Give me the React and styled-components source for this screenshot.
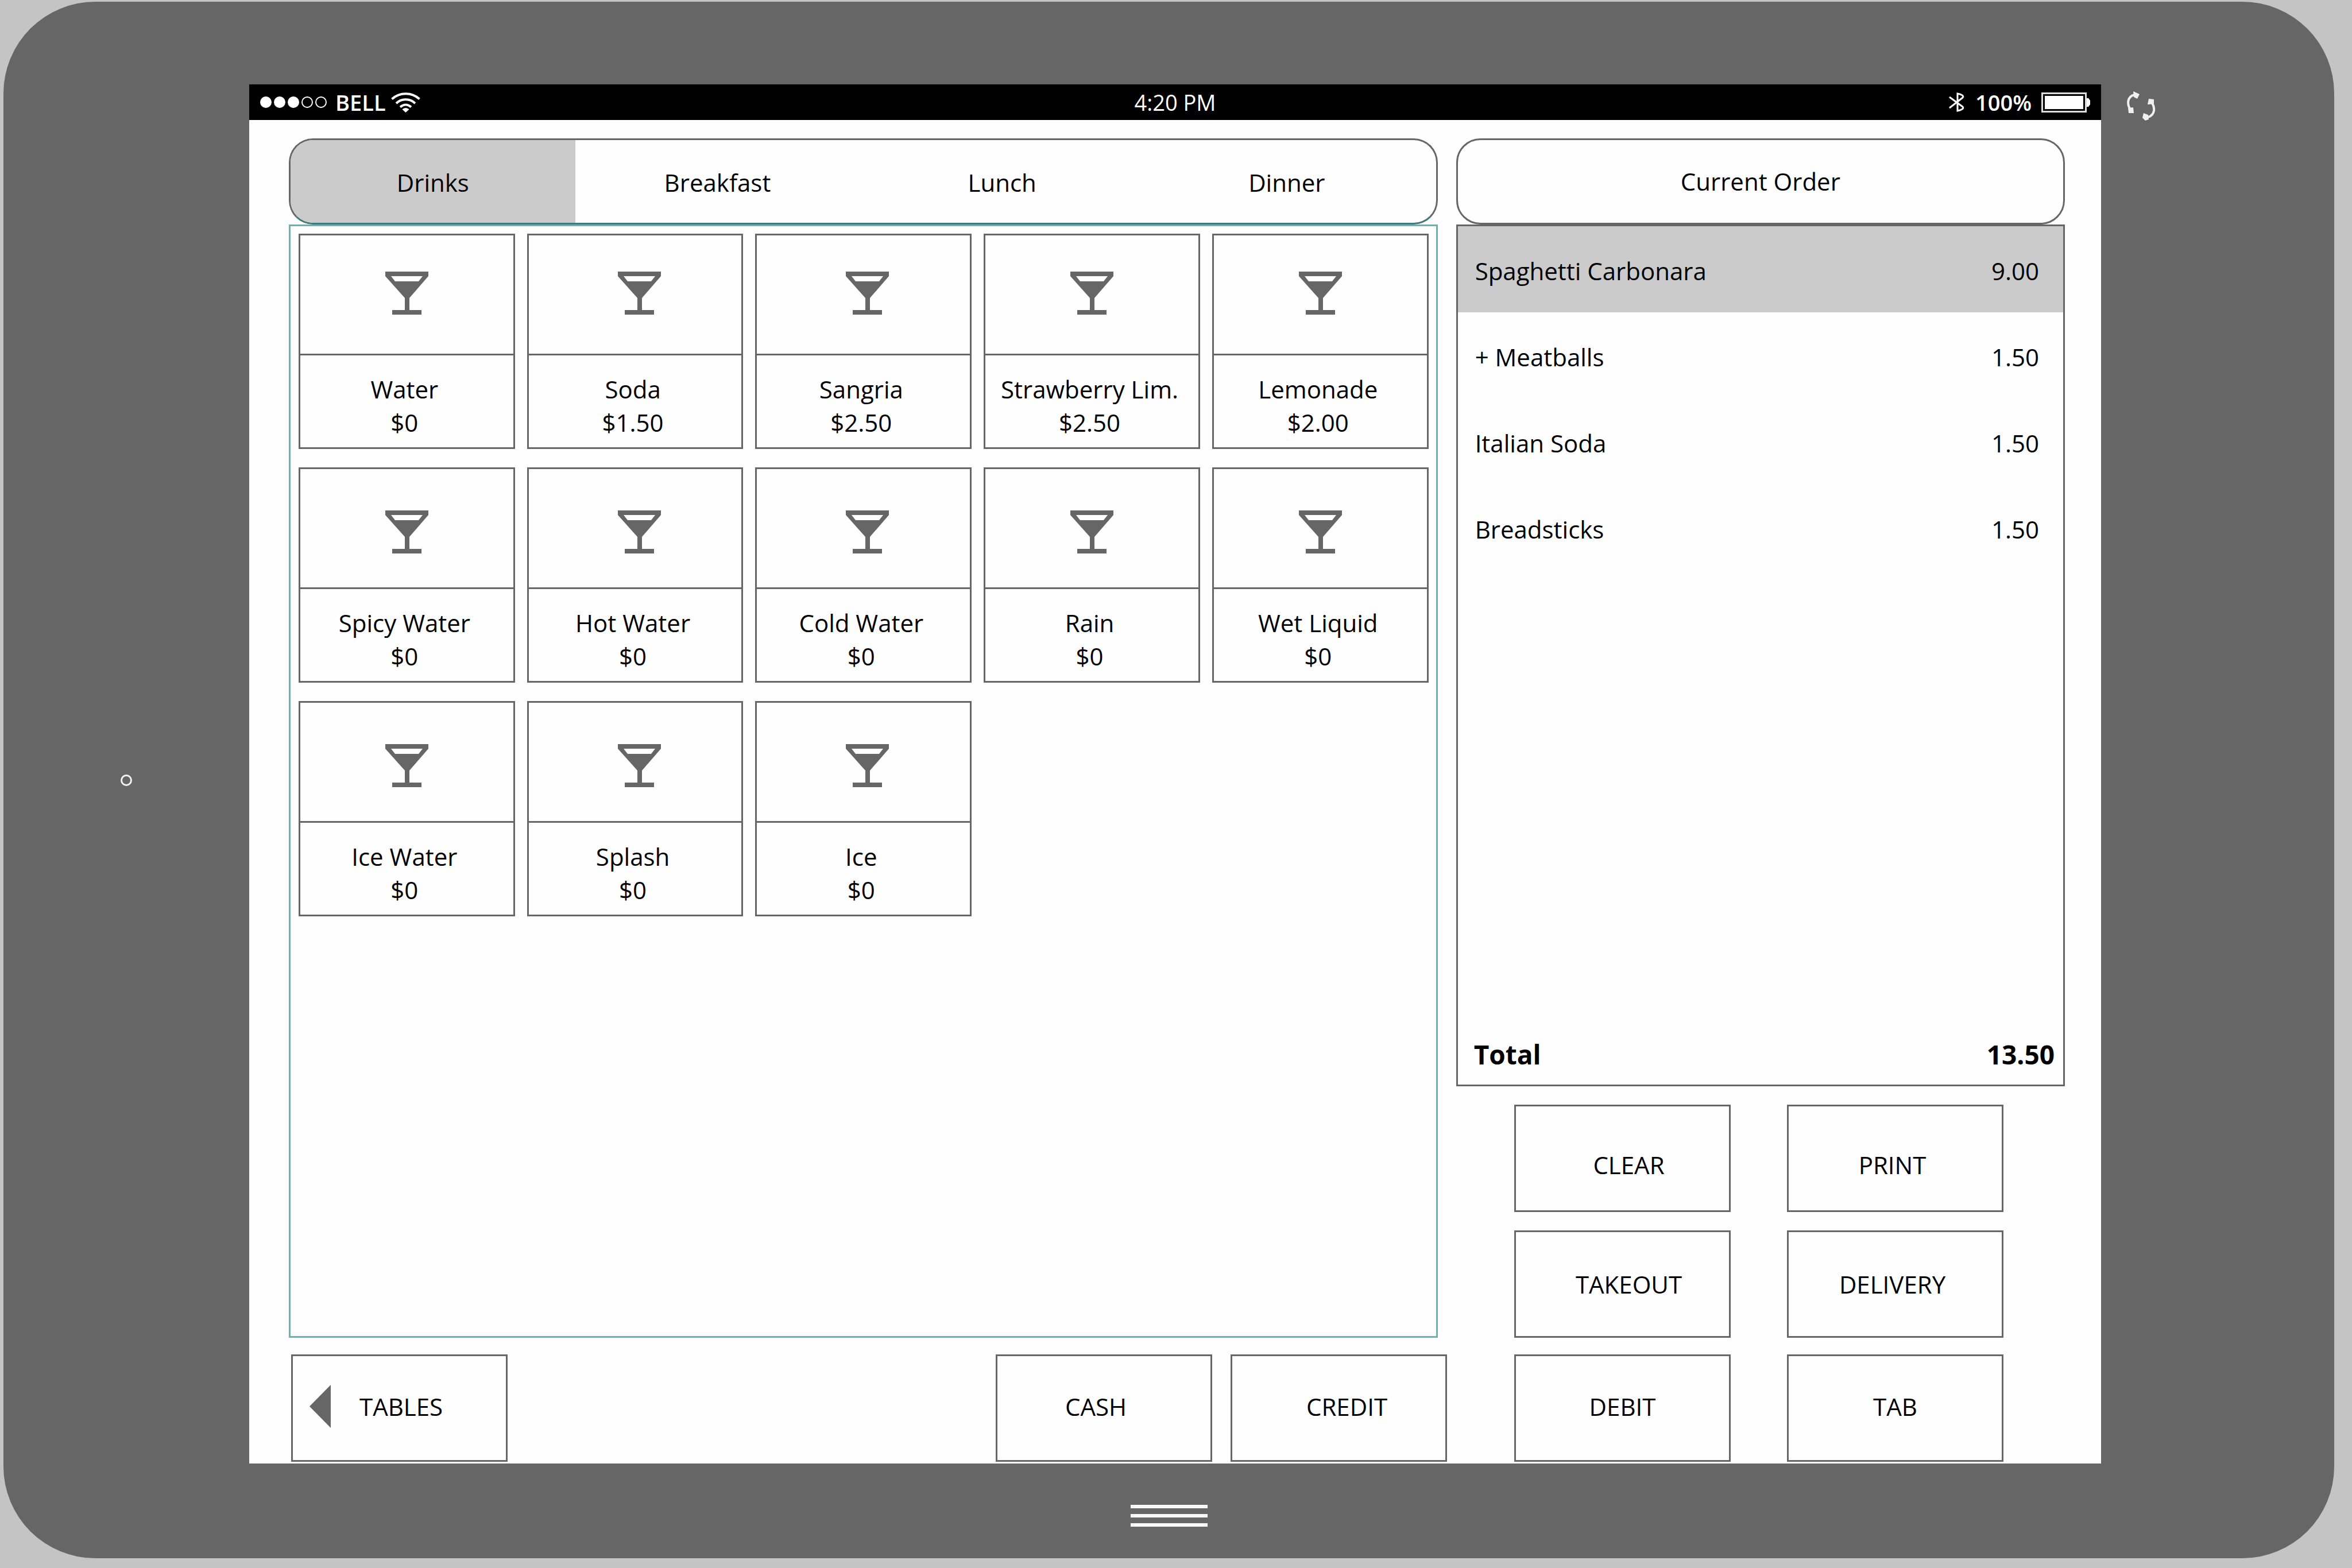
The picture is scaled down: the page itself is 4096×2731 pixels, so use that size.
import React, { useState } from "react";
import styled, { createGlobalStyle } from "styled-components";

const GlobalStyle = createGlobalStyle`
  *, *::before, *::after { box-sizing: border-box; }
  body {
    margin: 0;
    background: #c4c4c4;
    color: #000;
    font-family: "Open Sans", "Noto Sans", sans-serif;
    font-size: 42px;
    line-height: 58px;
  }
  button {
    font: inherit;
    color: inherit;
    background: none;
    border: 0;
    padding: 0;
    cursor: pointer;
  }
`;

const Device = styled.div`
  display: grid;
  grid-template-columns: 428px minmax(0, 1fr) 406px;
  grid-template-rows: 144px minmax(0, 1fr) 165px;
  min-height: calc(100vh - 20px);
  margin: 3px 31px 17px 6px;
  border-radius: 160px;
  background: #666;
`;

const CameraSide = styled.div`
  grid-area: 1 / 1 / 4 / 2;
  display: flex;
  align-items: center;
  justify-content: center;
`;

const Camera = styled.span`
  width: 20px;
  height: 20px;
  border: 3px solid #f2f2f2;
  border-radius: 50%;
`;

const RotateSide = styled.div`
  grid-area: 2 / 3 / 3 / 4;
  padding: 12px 44px;
`;

const RotateButton = styled.button`
  display: block;
  width: 51px;
  height: 51px;
  svg { display: block; width: 100%; height: 100%; }
`;

const HomeSide = styled.div`
  grid-area: 3 / 1 / 4 / 4;
  display: flex;
  justify-content: center;
  align-items: flex-start;
  padding-top: 72px;
`;

const HomeButton = styled.button`
  display: flex;
  flex-direction: column;
  gap: 10px;
  width: 134px;
`;

const HomeLine = styled.span`
  height: 6px;
  width: 100%;
  background: #fafafa;
`;

const Screen = styled.div`
  grid-area: 2 / 2 / 3 / 3;
  display: flex;
  flex-direction: column;
  background: #fefefe;
`;

const StatusBar = styled.header`
  display: grid;
  grid-template-columns: 1fr auto 1fr;
  align-items: center;
  height: 62px;
  padding: 0 19px;
  background: #000;
  color: #fff;
  font-size: 38px;
`;

const StatusGroup = styled.div`
  display: flex;
  align-items: center;
  justify-content: ${(p) => (p.$end ? "flex-end" : "flex-start")};
  gap: ${(p) => (p.$end ? 17 : 9)}px;
  font-weight: 600;
`;

const Signal = styled.div`
  display: flex;
  gap: 4px;
  margin-right: 6px;
`;

const Dot = styled.span`
  width: 20px;
  height: 20px;
  border: 2px solid #fff;
  border-radius: 50%;
  background: ${(p) => (p.$on ? "#fff" : "transparent")};
`;

const Main = styled.main`
  flex: 1;
  display: grid;
  grid-template-columns: minmax(0, 100fr) minmax(0, 53fr);
  gap: 32px;
  padding: 32px 63px 0 69px;
`;

const Column = styled.section`
  display: flex;
  flex-direction: column;
`;

const Tabs = styled.div`
  display: grid;
  grid-template-columns: repeat(4, 1fr);
  height: 150px;
  padding-right: 12px;
  border: 3px solid #666;
  border-bottom-color: #44777a;
  border-radius: 42px;
  overflow: hidden;
`;

const Tab = styled.button`
  padding-top: 4px;
  background: ${(p) => (p.$active ? "#cbcbcb" : "transparent")};
`;

const MenuPanel = styled.div`
  flex: 1;
  padding: 13px 13px 13px 14px;
  border: 3px solid #62b5b5;
`;

const CardArt = styled.span`
  display: flex;
  align-items: center;
  justify-content: center;
  width: 100%;
  height: 209px;
  padding-bottom: 6px;
  border-bottom: 3px solid #666;
  svg { width: 75px; height: 75px; }
`;

const MenuGrid = styled.div`
  display: grid;
  grid-template-columns: repeat(5, minmax(0, 1fr));
  column-gap: 21px;
  row-gap: 32px;

  > :nth-child(n + 6) ${CardArt} {
    padding: 12px 0 0;
  }
  > :nth-child(5n + 2) ${CardArt},
  > :nth-child(5n + 3) ${CardArt} {
    padding-left: 14px;
  }
`;

const Card = styled.button`
  display: flex;
  flex-direction: column;
  height: 375px;
  border: 3px solid #666;
`;

const CardLabel = styled.span`
  display: flex;
  flex-direction: column;
  align-items: center;
  width: 100%;
  padding: 30px 8px 0 0;
  white-space: nowrap;
`;

const OrderTitle = styled.h1`
  display: flex;
  align-items: center;
  justify-content: center;
  height: 150px;
  margin: 0;
  border: 3px solid #666;
  border-radius: 42px;
  font-size: 42px;
  font-weight: 400;
`;

const OrderPanel = styled.div`
  flex: 1;
  display: flex;
  flex-direction: column;
  justify-content: space-between;
  border: 3px solid #666;
`;

const OrderTable = styled.table`
  width: 100%;
  border-collapse: collapse;
`;

const OrderRow = styled.tr`
  height: 150px;
  background: ${(p) => (p.$selected ? "#cbcbcb" : "transparent")};
`;

const ItemCell = styled.td`
  padding: 6px 0 0 30px;
`;

const PriceCell = styled.td`
  padding: 6px 42px 0 0;
  text-align: right;
`;

const TotalRow = styled.div`
  display: flex;
  justify-content: space-between;
  padding: 0 15px 24px 28px;
  font-size: 46px;
  font-weight: 700;
`;

const ActionButton = styled.button`
  display: flex;
  align-items: center;
  justify-content: ${(p) => (p.$back ? "flex-start" : "center")};
  gap: 50px;
  width: 377px;
  height: 187px;
  padding: ${(p) => (p.$back ? "0 29px 6px" : "0")};
  border: 3px solid #666;
`;

const ActionRow = styled.div`
  display: flex;
  justify-content: flex-end;
  gap: 98px;
`;

const Actions = styled.div`
  display: flex;
  flex-direction: column;
  gap: 32px;
  margin-top: 32px;
  padding-right: 107px;

  ${ActionRow}:first-child ${ActionButton} {
    padding-top: 22px;
  }
  ${ActionButton}:first-child {
    padding-left: 22px;
  }
  ${ActionButton}:last-child {
    padding-right: 10px;
  }
`;

const Footer = styled.footer`
  display: flex;
  justify-content: space-between;
  padding: 29px 170px 3px 73px;
`;

const FooterRight = styled.div`
  display: flex;
  gap: 117px;
`;

const CardPair = styled.div`
  display: flex;
  gap: 32px;

  ${ActionButton} {
    padding-bottom: 6px;
  }
  ${ActionButton}:first-child {
    padding-right: 28px;
  }
  ${ActionButton}:last-child {
    padding-left: 28px;
  }
`;

const AccountPair = styled.div`
  display: flex;
  gap: 98px;

  ${ActionButton} {
    padding-bottom: 6px;
  }
`;

const GlassIcon = () => (
  <svg viewBox="0 0 75 75" fill="#666" fillRule="evenodd" aria-hidden="true">
    <path d="M0 0H75V8L42 46V67H63V75H12V67H34V46L0 8ZM10 8L17 17H58L65 8Z" />
  </svg>
);

const WifiIcon = () => (
  <svg width="51" height="35" viewBox="0 0 51 35" fill="none" stroke="#fff" strokeWidth="4" aria-hidden="true">
    <path d="M1.500 11.500C15 -1 36 -1 49.500 11.500" />
    <path d="M9 19C18 10 33 10 42 19" />
    <path d="M16 25.500C22 20 29 20 35 25.500" />
    <path d="M19.500 29.500C23 26 28 26 31.500 29.500L25.500 35Z" fill="#fff" stroke="none" />
  </svg>
);

const BluetoothIcon = () => (
  <svg width="30" height="34" viewBox="0 0 30 34" fill="none" stroke="#fff" strokeWidth="3" aria-hidden="true">
    <path d="M2 8L25 25C28 28 22 31 16 32V2C22 3 28 6 25 9L2 27" />
  </svg>
);

const BatteryIcon = () => (
  <svg width="85" height="35" viewBox="0 0 85 35" aria-hidden="true">
    <rect x="1.500" y="1.500" width="76" height="32" fill="none" stroke="#ddd" strokeWidth="3" />
    <rect x="6" y="6" width="67" height="23" fill="#fff" />
    <path d="M79 10H82L85 14V21L82 25H79Z" fill="#fff" />
  </svg>
);

const RotateIcon = () => (
  <svg viewBox="0 0 51 51" fill="none" stroke="#f0f0f0" strokeWidth="4" aria-hidden="true">
    <path d="M8 33C0 22 2 9 14 6" />
    <path d="M12 0L23 5L19 13L13 10ZM3 29L12 28L13 38L4 38Z" fill="#f0f0f0" stroke="none" />
    <path d="M43 18C51 28 50 41 38 45" />
    <path d="M39 13L48 14L48 22L37 23ZM30 38L38 41L39 49L33 51L28 46Z" fill="#f0f0f0" stroke="none" />
  </svg>
);

const BackArrow = () => (
  <svg width="37" height="75" viewBox="0 0 37 75" aria-hidden="true">
    <path d="M37 0V75L0 37.500Z" fill="#666" />
  </svg>
);

const categories = ["Drinks", "Breakfast", "Lunch", "Dinner"];

const drinks = [
  ["Water", "$0"],
  ["Soda", "$1.50"],
  ["Sangria", "$2.50"],
  ["Strawberry Lim.", "$2.50"],
  ["Lemonade", "$2.00"],
  ["Spicy Water", "$0"],
  ["Hot Water", "$0"],
  ["Cold Water", "$0"],
  ["Rain", "$0"],
  ["Wet Liquid", "$0"],
  ["Ice Water", "$0"],
  ["Splash", "$0"],
  ["Ice", "$0"],
];

const order = [
  ["Spaghetti Carbonara", "9.00"],
  ["+ Meatballs", "1.50"],
  ["Italian Soda", "1.50"],
  ["Breadsticks", "1.50"],
];

export default function App() {
  const [category, setCategory] = useState("Drinks");
  const [line, setLine] = useState(0);

  return (
    <>
      <GlobalStyle />
      <Device>
        <CameraSide>
          <Camera />
        </CameraSide>
        <Screen>
          <StatusBar>
            <StatusGroup>
              <Signal>
                {[1, 1, 1, 0, 0].map((on, i) => (
                  <Dot key={i} $on={on === 1} />
                ))}
              </Signal>
              <span>BELL</span>
              <WifiIcon />
            </StatusGroup>
            <span>4:20 PM</span>
            <StatusGroup $end>
              <BluetoothIcon />
              <span>100%</span>
              <BatteryIcon />
            </StatusGroup>
          </StatusBar>

          <Main>
            <Column>
              <Tabs role="tablist">
                {categories.map((name) => (
                  <Tab
                    key={name}
                    role="tab"
                    aria-selected={name === category}
                    $active={name === category}
                    onClick={() => setCategory(name)}
                  >
                    {name}
                  </Tab>
                ))}
              </Tabs>
              <MenuPanel>
                <MenuGrid>
                  {drinks.map(([name, price]) => (
                    <Card key={name}>
                      <CardArt>
                        <GlassIcon />
                      </CardArt>
                      <CardLabel>
                        <span>{name}</span>
                        <span>{price}</span>
                      </CardLabel>
                    </Card>
                  ))}
                </MenuGrid>
              </MenuPanel>
            </Column>

            <Column>
              <OrderTitle>Current Order</OrderTitle>
              <OrderPanel>
                <OrderTable>
                  <tbody>
                    {order.map(([name, price], i) => (
                      <OrderRow key={name} $selected={i === line} onClick={() => setLine(i)}>
                        <ItemCell>{name}</ItemCell>
                        <PriceCell>{price}</PriceCell>
                      </OrderRow>
                    ))}
                  </tbody>
                </OrderTable>
                <TotalRow>
                  <span>Total</span>
                  <span>13.50</span>
                </TotalRow>
              </OrderPanel>
              <Actions>
                <ActionRow>
                  <ActionButton>CLEAR</ActionButton>
                  <ActionButton>PRINT</ActionButton>
                </ActionRow>
                <ActionRow>
                  <ActionButton>TAKEOUT</ActionButton>
                  <ActionButton>DELIVERY</ActionButton>
                </ActionRow>
              </Actions>
            </Column>
          </Main>

          <Footer>
            <ActionButton $back>
              <BackArrow />
              TABLES
            </ActionButton>
            <FooterRight>
              <CardPair>
                <ActionButton>CASH</ActionButton>
                <ActionButton>CREDIT</ActionButton>
              </CardPair>
              <AccountPair>
                <ActionButton>DEBIT</ActionButton>
                <ActionButton>TAB</ActionButton>
              </AccountPair>
            </FooterRight>
          </Footer>
        </Screen>
        <RotateSide>
          <RotateButton aria-label="Rotate">
            <RotateIcon />
          </RotateButton>
        </RotateSide>
        <HomeSide>
          <HomeButton aria-label="Home">
            <HomeLine />
            <HomeLine />
            <HomeLine />
          </HomeButton>
        </HomeSide>
      </Device>
    </>
  );
}
